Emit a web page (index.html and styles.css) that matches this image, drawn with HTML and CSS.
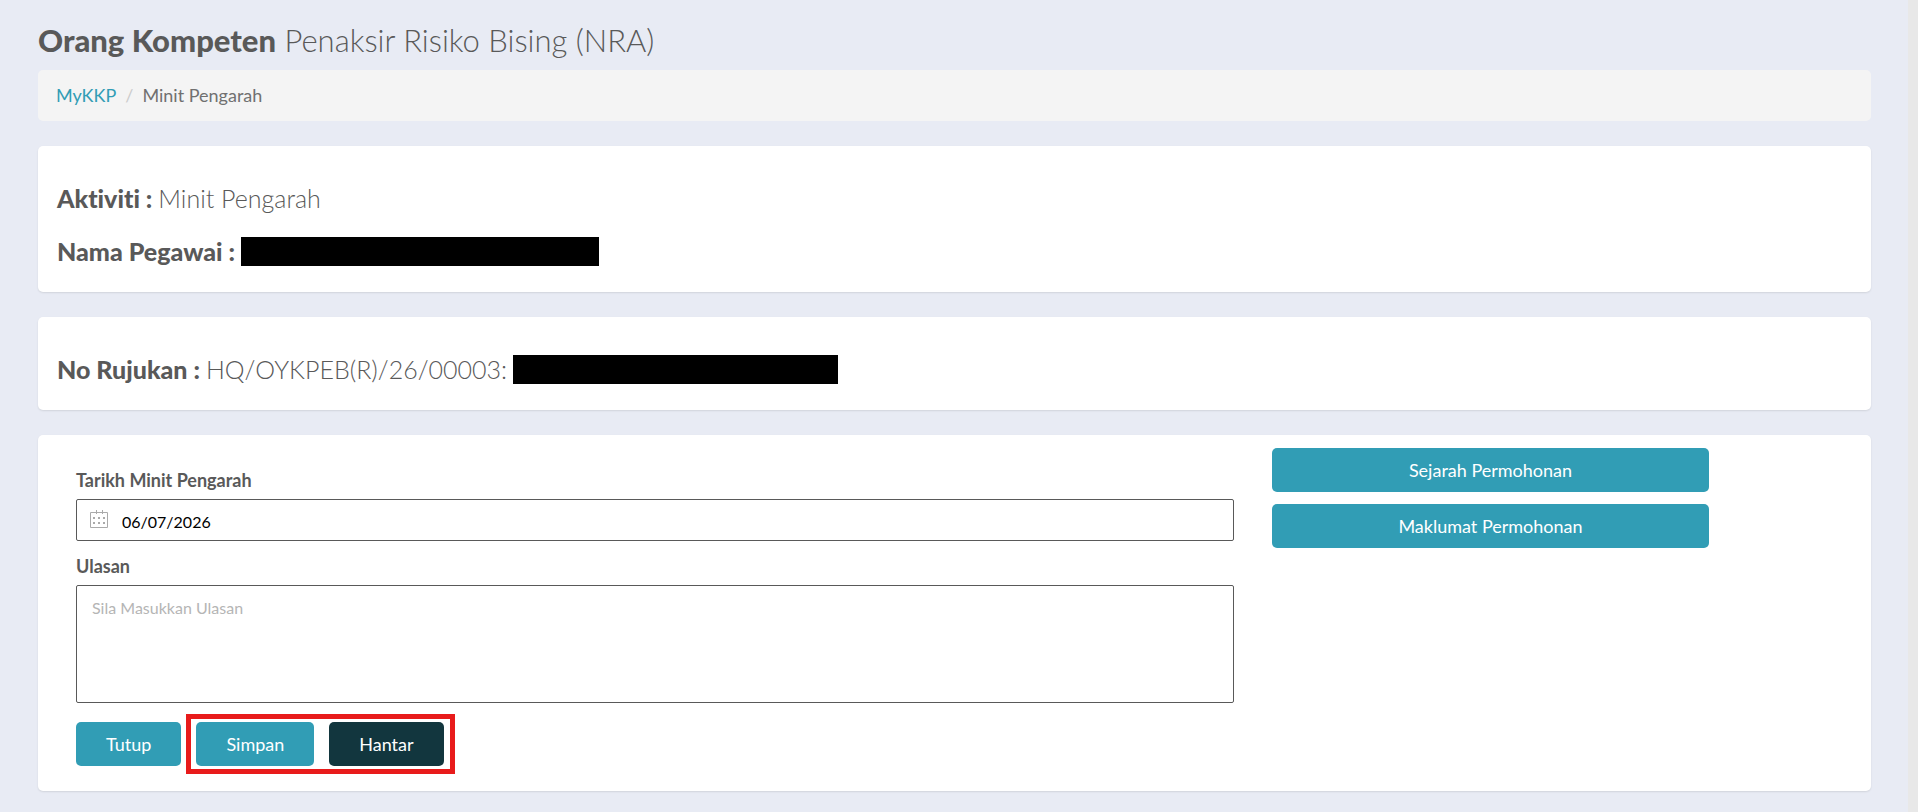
FILE: index.html
```html
<!DOCTYPE html>
<html lang="ms">
<head>
  <meta charset="UTF-8">
  <meta name="viewport" content="width=device-width, initial-scale=1.0">
  <title>Minit Pengarah</title>
  <link rel="stylesheet" href="styles.css">
</head>
<body>
  <main class="page">
    <h1 class="page-title"><strong>Orang Kompeten</strong> Penaksir Risiko Bising (NRA)</h1>

    <nav class="breadcrumb" aria-label="breadcrumb">
      <a href="#">MyKKP</a>
      <span class="divider">/</span>
      <span class="current">Minit Pengarah</span>
    </nav>

    <section class="card info">
      <h2><strong>Aktiviti :</strong> <span>Minit Pengarah</span></h2>
      <h2><strong>Nama Pegawai :</strong> <span class="redacted officer"></span></h2>
    </section>

    <section class="card info">
      <h2><strong>No Rujukan :</strong> <span>HQ/OYKPEB(R)/26/00003:</span> <span class="redacted reference"></span></h2>
    </section>

    <section class="card form-card">
      <form class="form">
        <label for="tarikh">Tarikh Minit Pengarah</label>
        <div class="date-field">
          <svg class="calendar" viewBox="0 0 20 20" width="20" height="20" aria-hidden="true">
            <path d="M1.5 2.5h17v15h-17zM7.5 0v4M13.5 0v4" fill="none" stroke="currentColor"/>
            <path d="M4 7h2v2H4zM9 7h2v2H9zM14 7h2v2h-2zM4 12h2v2H4zM9 12h2v2H9zM14 12h2v2h-2z" fill="currentColor"/>
          </svg>
          <input type="text" id="tarikh" value="06/07/2026">
        </div>

        <label for="ulasan">Ulasan</label>
        <textarea id="ulasan" placeholder="Sila Masukkan Ulasan"></textarea>

        <div class="actions">
          <button type="button" class="btn">Tutup</button>
          <div class="highlight">
            <button type="button" class="btn">Simpan</button>
            <button type="submit" class="btn btn-dark">Hantar</button>
          </div>
        </div>
      </form>

      <div class="side">
        <button type="button" class="btn">Sejarah Permohonan</button>
        <button type="button" class="btn">Maklumat Permohonan</button>
      </div>
    </section>
  </main>
</body>
</html>
```

FILE: styles.css
```css
* {
  box-sizing: border-box;
}

body {
  margin: 0;
  min-height: 100vh;
  background: #e8ebf4;
  border-right: 10px solid #e8e8e8;
  font-family: Lato, sans-serif;
  font-size: 18px;
  line-height: 24px;
  font-variant-ligatures: none;
  color: #595959;
}

.page {
  padding: 21px 37px 20px 38px;
}

.page-title {
  margin: 0 0 11px;
  font-size: 31px;
  line-height: 38px;
  font-weight: 300;
}

strong {
  font-weight: 900;
}

.breadcrumb {
  display: flex;
  gap: 9px;
  padding: 13px 18px 14px;
  background: #f4f4f4;
  border-radius: 5px;
}

.breadcrumb a {
  color: #319db5;
  text-decoration: none;
}

.divider {
  color: #ccc;
}

.current {
  color: #707070;
}

.card {
  margin-top: 25px;
  background: #fff;
  border-radius: 5px;
  box-shadow: 0 1px 2px rgba(0, 0, 0, 0.1);
}

.info {
  display: grid;
  gap: 21px;
  padding: 36px 19px 25px;
}

.info h2 {
  display: flex;
  align-items: center;
  gap: 6px;
  margin: 0;
  font-size: 25px;
  line-height: 32px;
  font-weight: 300;
}

.redacted {
  height: 29px;
  background: #000;
}

.officer {
  width: 358px;
}

.reference {
  width: 325px;
}

.form-card {
  display: grid;
  grid-template-columns: 1158fr 437fr 86fr;
  column-gap: 38px;
  align-items: start;
  padding: 13px 38px 17px;
}

.form {
  display: flex;
  flex-direction: column;
  padding-top: 20px;
}

.form label {
  margin-bottom: 7px;
  font-weight: 700;
}

.date-field {
  display: flex;
  align-items: center;
  gap: 13px;
  height: 42px;
  margin-bottom: 13px;
  padding: 0 12px;
  border: 1px solid #595959;
  border-radius: 2px;
}

.calendar {
  color: #aaa;
}

.date-field input {
  flex: 1;
  border: 0;
  padding: 2px 0 0;
  outline: none;
  font-family: inherit;
  font-size: 16px;
  color: #000;
}

textarea {
  display: block;
  height: 118px;
  padding: 12px 15px;
  border: 1px solid #595959;
  border-radius: 2px;
  resize: none;
  font-family: inherit;
  font-size: 16px;
  line-height: 20px;
}

textarea::placeholder {
  color: #b5b5b5;
}

.actions {
  display: flex;
  align-items: center;
  gap: 5px;
  margin-top: 11px;
}

.highlight {
  display: flex;
  gap: 15px;
  padding: 3px 6px 3px 5px;
  border: 5px solid #e81b1b;
}

.btn {
  height: 44px;
  padding: 0 30px;
  border: 0;
  border-radius: 5px;
  background: #319db5;
  color: #fff;
  font-family: inherit;
  font-size: 18px;
  cursor: pointer;
}

.btn-dark {
  background: #12363e;
}

.side {
  display: grid;
  gap: 12px;
}
```
